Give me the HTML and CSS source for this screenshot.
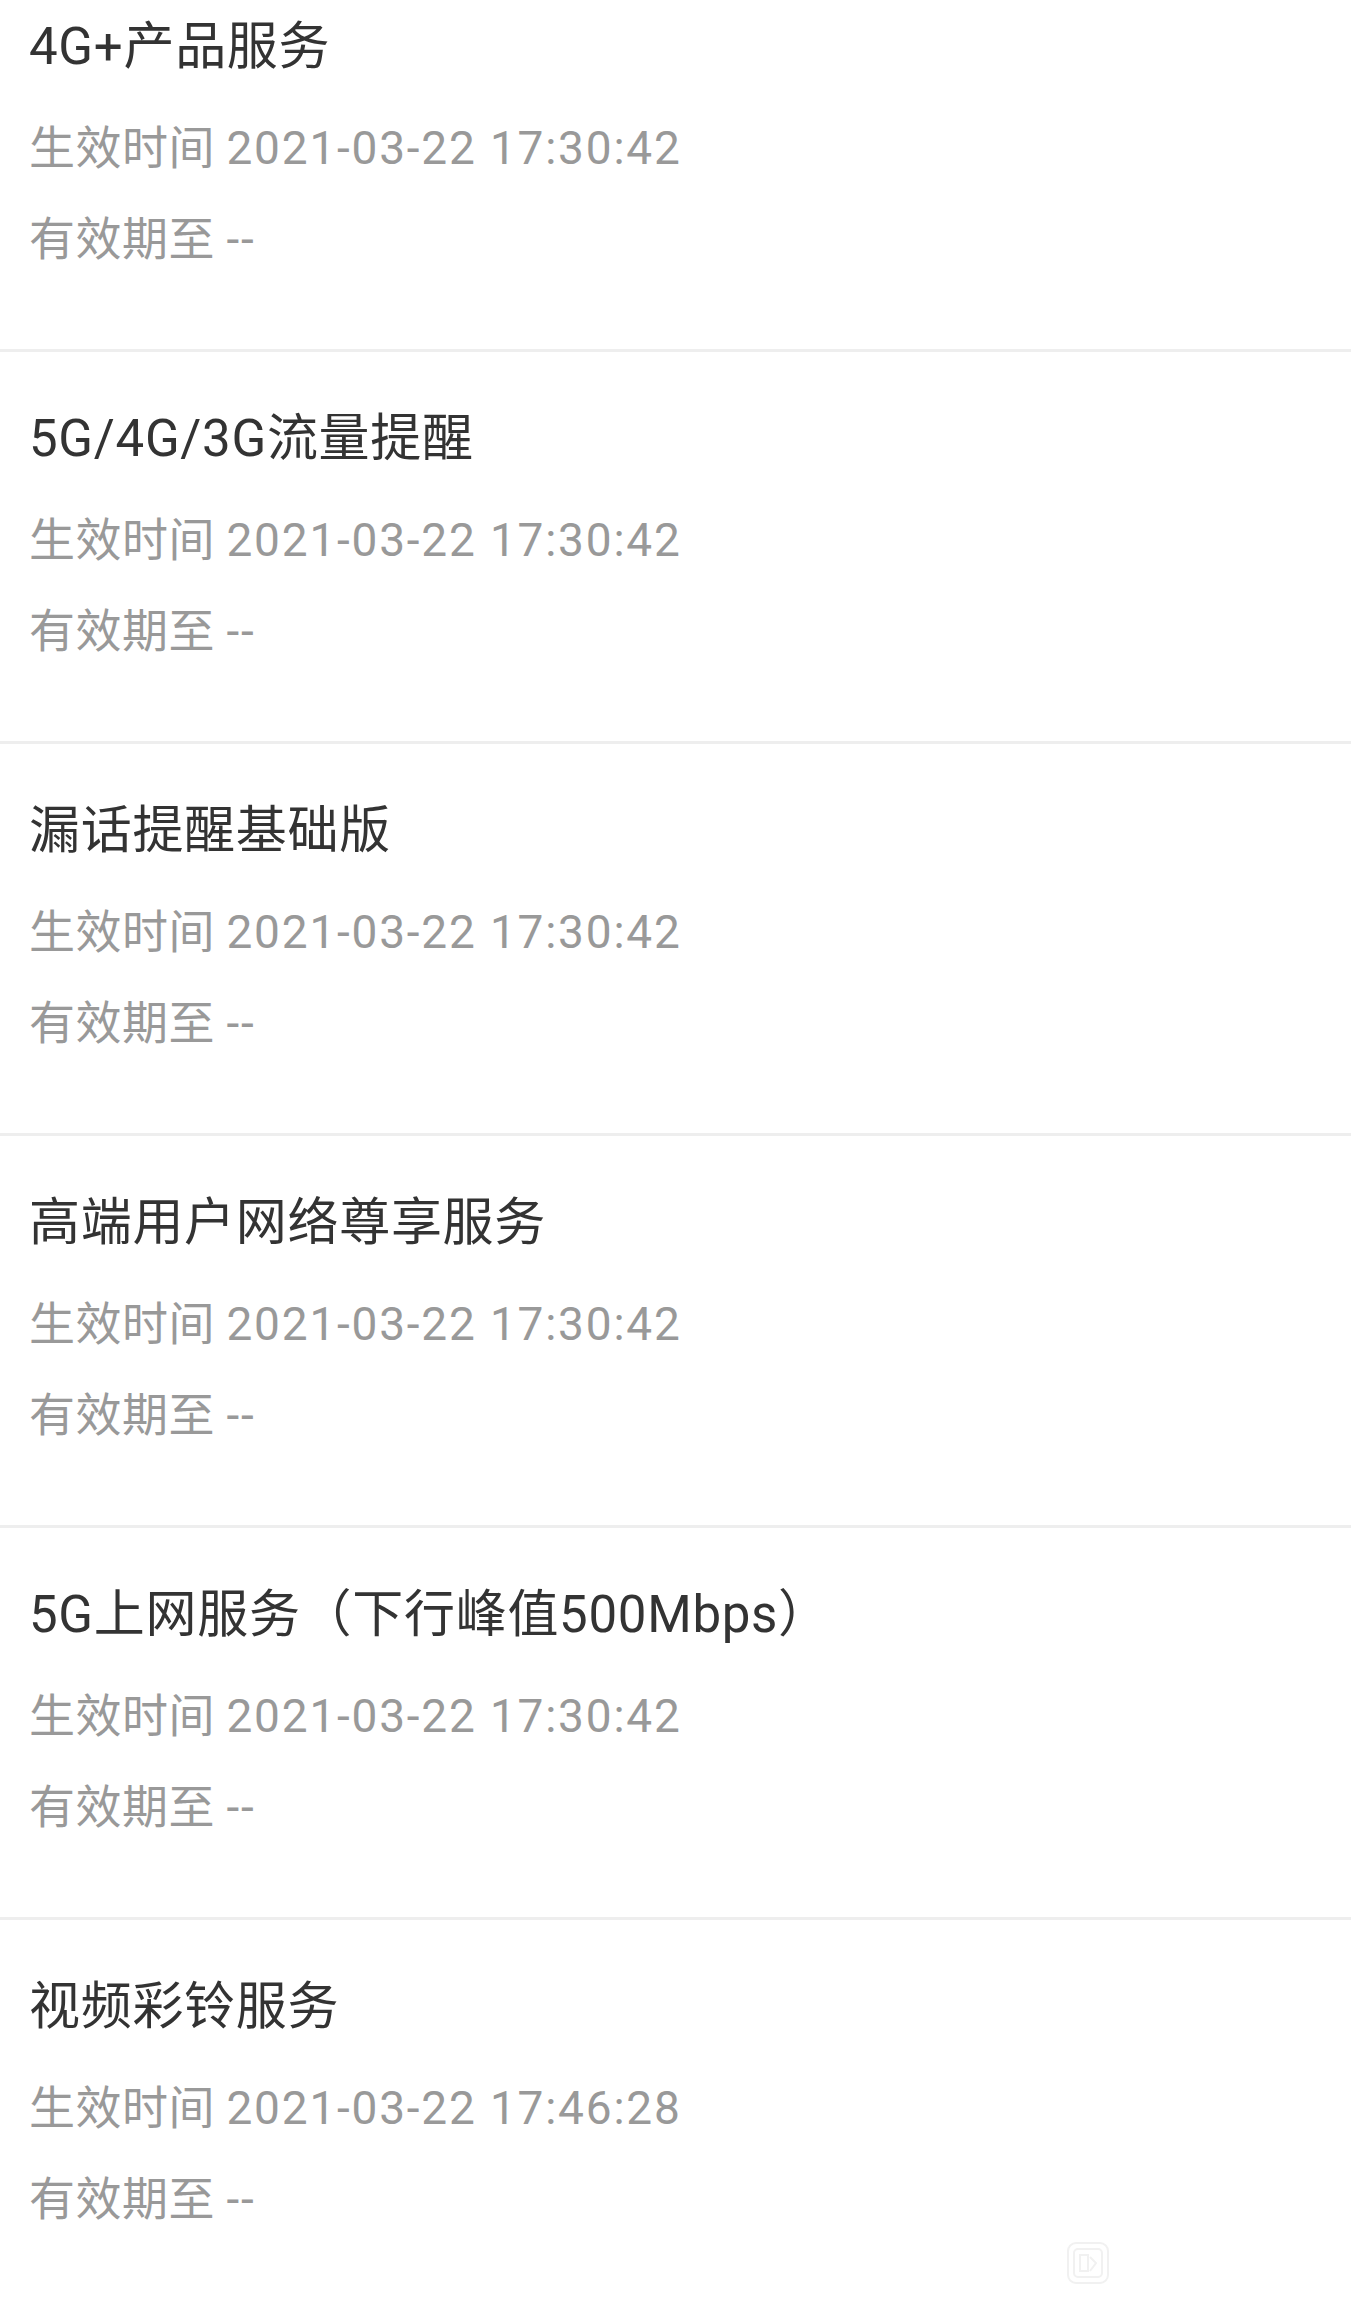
FILE: index.html
```html
<!DOCTYPE html>
<html lang="zh-CN">
<head>
<meta charset="utf-8">
<title>服务列表</title>
<link rel="stylesheet" href="styles.css">
</head>
<body>
<div class="page">
  <ul class="list">
    <li class="item">
      <div class="title">4G+产品服务</div>
      <div class="meta"><span class="label">生效时间</span> <span class="value">2021-03-22 17:30:42</span></div>
      <div class="meta"><span class="label">有效期至</span> <span class="value">--</span></div>
    </li>
    <li class="item">
      <div class="title">5G/4G/3G流量提醒</div>
      <div class="meta"><span class="label">生效时间</span> <span class="value">2021-03-22 17:30:42</span></div>
      <div class="meta"><span class="label">有效期至</span> <span class="value">--</span></div>
    </li>
    <li class="item">
      <div class="title">漏话提醒基础版</div>
      <div class="meta"><span class="label">生效时间</span> <span class="value">2021-03-22 17:30:42</span></div>
      <div class="meta"><span class="label">有效期至</span> <span class="value">--</span></div>
    </li>
    <li class="item">
      <div class="title">高端用户网络尊享服务</div>
      <div class="meta"><span class="label">生效时间</span> <span class="value">2021-03-22 17:30:42</span></div>
      <div class="meta"><span class="label">有效期至</span> <span class="value">--</span></div>
    </li>
    <li class="item">
      <div class="title">5G上网服务（下行峰值500Mbps）</div>
      <div class="meta"><span class="label">生效时间</span> <span class="value">2021-03-22 17:30:42</span></div>
      <div class="meta"><span class="label">有效期至</span> <span class="value">--</span></div>
    </li>
    <li class="item">
      <div class="title">视频彩铃服务</div>
      <div class="meta"><span class="label">生效时间</span> <span class="value">2021-03-22 17:46:28</span></div>
      <div class="meta"><span class="label">有效期至</span> <span class="value">--</span></div>
    </li>
  </ul>
  <svg class="watermark" width="44" height="44" viewBox="0 0 44 44" fill="none" stroke="#f1f1f1" stroke-width="2">
    <rect x="2" y="2" width="40" height="40" rx="8"/>
    <rect x="8" y="8" width="28" height="28" rx="4"/>
    <path d="M14 14h8v16h-8z"/>
    <path d="M24 16l6 6-6 8"/>
  </svg>
</div>
</body>
</html>
```
FILE: styles.css
```css
html, body {
  margin: 0;
  padding: 0;
  background: #ffffff;
}

body {
  font-family: Roboto, "Noto Sans CJK SC", "Noto Sans", sans-serif;
  height: 2300px;
  overflow: hidden;
}

.page {
  position: relative;
  height: 2300px;
}

.list {
  list-style: none;
  margin: 0;
  padding: 0;
}

.item {
  padding: 57px 29px 64px;
  border-bottom: 3px solid #eeeeee;
}

.item:first-child {
  padding-top: 17px;
}

.title {
  font-size: 51px;
  line-height: 60px;
  letter-spacing: 0.7px;
  color: #333333;
  margin-bottom: 26px;
  white-space: nowrap;
}

.meta {
  font-size: 46px;
  line-height: 91px;
  color: #999999;
  white-space: nowrap;
}

.label {
  letter-spacing: 0.5px;
}

.value {
  letter-spacing: 1.8px;
}

.watermark {
  position: absolute;
  left: 1066px;
  top: 2241px;
}
```
